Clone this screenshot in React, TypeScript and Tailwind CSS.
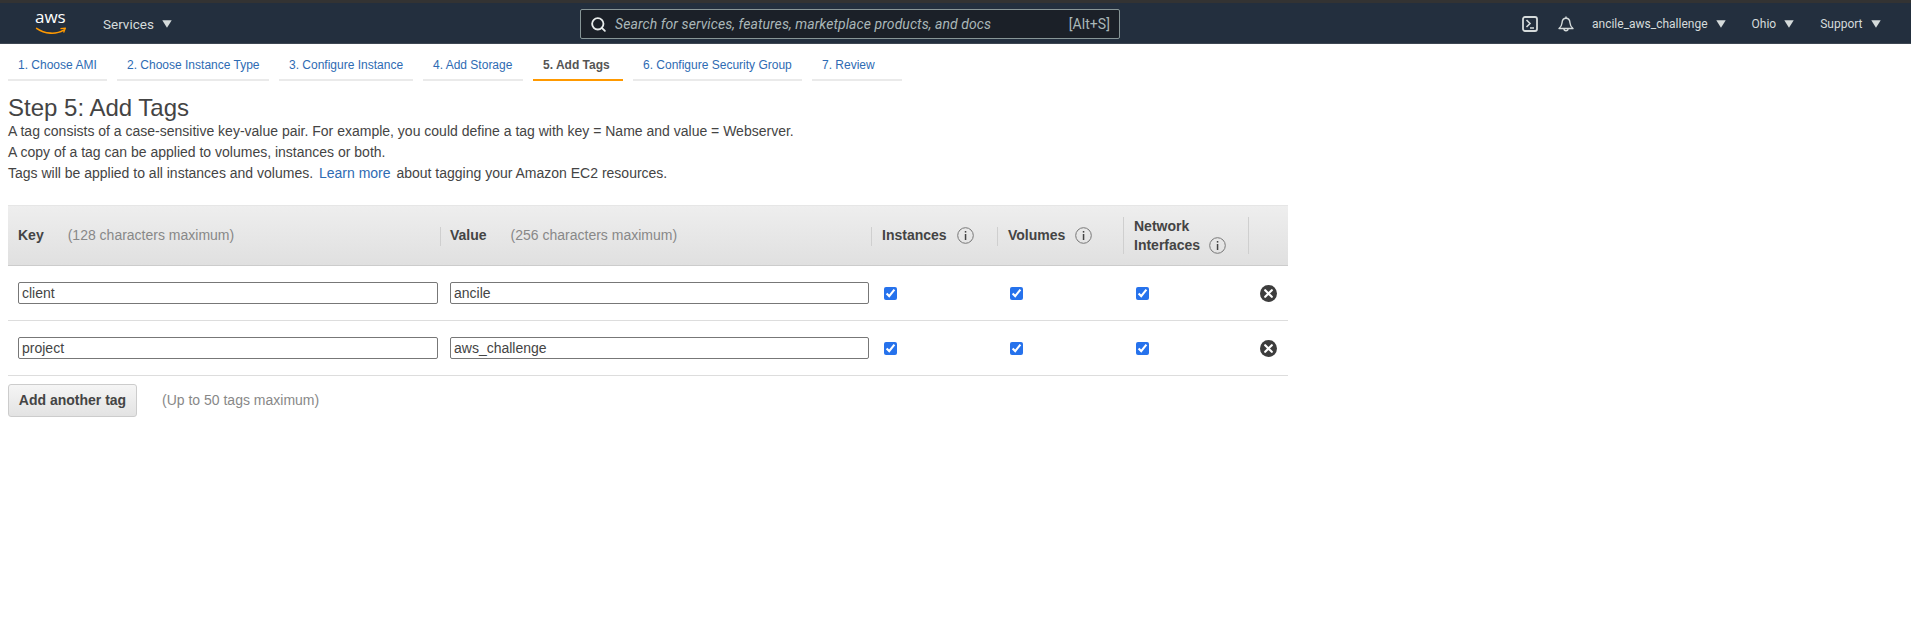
import { Search } from 'lucide-react'

const tabs = [
  { label: '1. Choose AMI', w: 'w-[99px]' },
  { label: '2. Choose Instance Type', w: 'w-[152px]' },
  { label: '3. Configure Instance', w: 'w-[134px]' },
  { label: '4. Add Storage', w: 'w-[100px]' },
  { label: '5. Add Tags', w: 'w-[90px]', active: true },
  { label: '6. Configure Security Group', w: 'w-[169px]' },
  { label: '7. Review', w: 'w-[90px]' },
]

const rows = [
  { key: 'client', value: 'ancile' },
  { key: 'project', value: 'aws_challenge' },
]

const gridCols = 'grid grid-cols-[432px_431px_126px_126px_125px_40px]'

const Caret = () => (
  <svg width="10" height="8" viewBox="0 0 10 8" className="ml-[8px]">
    <path d="M0.3 0.3H9.7L5 7.8Z" fill="#d5dbdb" />
  </svg>
)

const Info = () => (
  <svg width="17" height="17" viewBox="0 0 17 17" className="shrink-0">
    <circle cx="8.5" cy="8.5" r="7.8" fill="none" stroke="#777" strokeWidth="1" />
    <rect x="7.8" y="7" width="1.5" height="6" fill="#444" />
    <rect x="7.8" y="4" width="1.5" height="1.6" fill="#444" />
  </svg>
)

const Remove = () => (
  <svg width="17" height="17" viewBox="0 0 17 17">
    <circle cx="8.5" cy="8.5" r="8.5" fill="#3d3d3d" />
    <path d="M5.2 5.2L11.8 11.8M11.8 5.2L5.2 11.8" stroke="#fff" strokeWidth="2.2" strokeLinecap="round" />
  </svg>
)

const HeadCell = ({ children, tall = false, pad = 'pl-[11px]' }: { children?: React.ReactNode; tall?: boolean; pad?: string }) => (
  <div className={'relative flex items-center ' + pad}>
    <span className={'absolute left-0 w-px bg-[#cfcfcf] ' + (tall ? 'top-[11px] h-[37px]' : 'top-[21px] h-[19px]')} />
    {children}
  </div>
)

const App = () => {
  return (
    <div className="min-h-[629px] bg-white font-['Liberation_Sans',Arial,sans-serif] text-[14px] text-[#444]">
      <div className="h-[3px] bg-[#333333]" />
      <header className="flex h-[41px] items-center border-b border-[#3d4652] bg-[#232f3e] pt-[2px] font-['Roboto',sans-serif] text-[12px] text-[#d5dbdb]">
        <div className="relative ml-[35px] h-[30px] w-[32px]">
          <span className="absolute left-0 top-[-4px] text-[17px] leading-[24px] text-white font-['Open_Sans',sans-serif]">aws</span>
          <svg width="32" height="9" viewBox="0 0 34 10" className="absolute left-0 top-[18px]">
            <path d="M1 1.5C10 8 23 8.5 31 3.5" fill="none" stroke="#ff9900" strokeWidth="1.7" strokeLinecap="round" />
            <path d="M27.5 1.8L33 1.2L31 6.2" fill="none" stroke="#ff9900" strokeWidth="1.5" strokeLinejoin="round" />
          </svg>
        </div>
        <div className="ml-[36px] flex w-[70px] items-center text-[13.5px]">
          Services
          <Caret />
        </div>
        <div className="ml-[407px] flex h-[30px] w-[540px] items-center rounded-[2px] border border-[#879596] bg-[#1b2028] pl-[9px] pr-[9px]">
          <Search size={17} strokeWidth={2.6} className="text-[#e8ecec]" />
          <span className="ml-[8px] text-[14px] italic tracking-[0.08px] text-[#aab7b8]">Search for services, features, marketplace products, and docs</span>
          <span className="ml-auto text-[14px] tracking-[0.08px] text-[#aab7b8]">[Alt+S]</span>
        </div>
        <svg width="16" height="16" viewBox="0 0 16 16" className="ml-[402px]">
          <rect x="1" y="1" width="14" height="14" rx="2" fill="none" stroke="#d5dbdb" strokeWidth="1.8" />
          <path d="M4.5 4L8 7.5L4.5 11M8 12H12" fill="none" stroke="#d5dbdb" strokeWidth="1.6" />
        </svg>
        <svg width="16" height="16" viewBox="0 0 16 16" className="ml-[20px]">
          <path d="M1 12.5C3 11 3.8 9.5 4 7C4.2 4 5.8 2.2 8 2.2C10.2 2.2 11.8 4 12 7C12.2 9.5 13 11 15 12.5Z" fill="none" stroke="#d5dbdb" strokeWidth="1.4" strokeLinejoin="round" />
          <path d="M8 0.6V2.2M6 12.8A2 2 0 0 0 10 12.8" fill="none" stroke="#d5dbdb" strokeWidth="1.4" />
        </svg>
        <div className="ml-[18px] flex items-center">ancile_aws_challenge<Caret /></div>
        <div className="ml-[26px] flex items-center">Ohio<Caret /></div>
        <div className="ml-[26px] flex items-center">Support<Caret /></div>
      </header>

      <nav className="ml-[8px] flex gap-[10px] text-[12px]">
        {tabs.map((t) => (
          <div
            key={t.label}
            className={
              t.w +
              ' h-[37px] border-b-2 pl-[10px] pt-[13px] leading-[16px] whitespace-nowrap ' +
              (t.active ? 'border-[#ff9900] font-bold text-[#555]' : 'border-[#eaeaea] text-[#2e6bb3]')
            }
          >
            {t.label}
          </div>
        ))}
      </nav>

      <main className="px-[8px]">
        <h1 className="mt-[10px] text-[24px] font-normal leading-[34px] text-[#444]">Step 5: Add Tags</h1>
        <div className="-mt-[4px] leading-[21px]">
          <p>A tag consists of a case-sensitive key-value pair. For example, you could define a tag with key = Name and value = Webserver.</p>
          <p>A copy of a tag can be applied to volumes, instances or both.</p>
          <p>
            Tags will be applied to all instances and volumes. <a className="mx-[2px] text-[#2e6bb3]">Learn more</a> about tagging your Amazon EC2 resources.
          </p>
        </div>

        <div className="mt-[21px] w-[1280px]">
          <div className={gridCols + ' h-[61px] border-y border-t-[#e6e6e6] border-b-[#cccccc] bg-gradient-to-b from-[#eeeeee] to-[#e0e0e0] font-bold'}>
            <div className="flex items-center pl-[10px]">
              Key
              <span className="ml-[24px] font-normal text-[#888]">(128 characters maximum)</span>
            </div>
            <HeadCell pad="pl-[10px]">
              Value
              <span className="ml-[24px] font-normal text-[#888]">(256 characters maximum)</span>
            </HeadCell>
            <HeadCell>
              Instances
              <span className="ml-[10px]"><Info /></span>
            </HeadCell>
            <HeadCell>
              Volumes
              <span className="ml-[10px]"><Info /></span>
            </HeadCell>
            <HeadCell tall>
              <div className="leading-[19px]">
                Network
                <div className="flex items-center">
                  Interfaces
                  <span className="ml-[9px]"><Info /></span>
                </div>
              </div>
            </HeadCell>
            <HeadCell tall />
          </div>

          {rows.map((r) => (
            <div key={r.key} className={gridCols + ' h-[55px] items-center border-b border-[#dddddd]'}>
              <div className="pl-[10px]">
                <input defaultValue={r.key} className="block h-[22px] w-[420px] rounded-[2px] border border-[#777] pl-[3px] text-[14px] text-[#444] outline-none" />
              </div>
              <div className="pl-[10px]">
                <input defaultValue={r.value} className="block h-[22px] w-[419px] rounded-[2px] border border-[#777] pl-[3px] text-[14px] text-[#444] outline-none" />
              </div>
              <div className="pl-[13px]"><input type="checkbox" defaultChecked className="block h-[13px] w-[13px] accent-[#2672ec]" /></div>
              <div className="pl-[13px]"><input type="checkbox" defaultChecked className="block h-[13px] w-[13px] accent-[#2672ec]" /></div>
              <div className="pl-[13px]"><input type="checkbox" defaultChecked className="block h-[13px] w-[13px] accent-[#2672ec]" /></div>
              <div className="pl-[12px]"><Remove /></div>
            </div>
          ))}

          <div className="mt-[8px] flex items-center">
            <button className="h-[33px] w-[129px] rounded-[3px] border border-[#cccccc] bg-gradient-to-b from-[#f5f5f5] to-[#e3e3e3] text-[14px] font-bold text-[#444]">
              Add another tag
            </button>
            <span className="ml-[25px] text-[#888]">(Up to 50 tags maximum)</span>
          </div>
        </div>
      </main>
    </div>
  )
}

export default App
